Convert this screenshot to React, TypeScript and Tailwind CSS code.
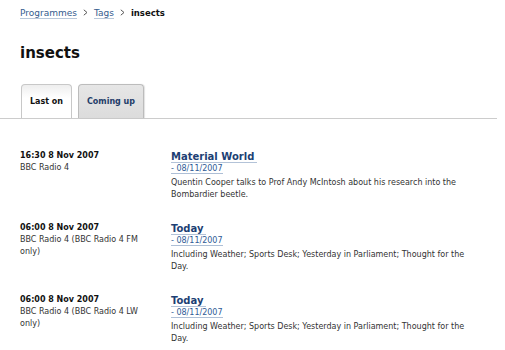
import React from "react";

function Chevron() {
  return (
    <svg
      width="5"
      height="7"
      viewBox="0 0 5 7"
      className="inline-block align-baseline mx-[6px]"
    >
      <polyline points="0.8,0.8 4,3.5 0.8,6.2" fill="none" stroke="#555" strokeWidth="1" />
    </svg>
  );
}

const rows = [
  {
    time: "16:30 8 Nov 2007",
    channel: "BBC Radio 4",
    title: "Material World",
    date: "- 08/11/2007",
    desc: "Quentin Cooper talks to Prof Andy McIntosh about his research into the Bombardier beetle.",
  },
  {
    time: "06:00 8 Nov 2007",
    channel: "BBC Radio 4 (BBC Radio 4 FM only)",
    title: "Today",
    date: "- 08/11/2007",
    desc: "Including Weather; Sports Desk; Yesterday in Parliament; Thought for the Day.",
  },
  {
    time: "06:00 8 Nov 2007",
    channel: "BBC Radio 4 (BBC Radio 4 LW only)",
    title: "Today",
    date: "- 08/11/2007",
    desc: "Including Weather; Sports Desk; Yesterday in Parliament; Thought for the Day.",
  },
];

export default function App() {
  return (
    <div className="w-[505px] h-[350px] bg-white overflow-hidden font-['DejaVu_Sans','Verdana',sans-serif] text-[#222]">
      <div className="pl-[20px] pt-[7px] text-[9px] leading-[12px]">
        <a className="text-[#345c8e] border-b border-[#b9c8da]">Programmes</a>
        <Chevron />
        <a className="text-[#345c8e] border-b border-[#b9c8da]">Tags</a>
        <Chevron />
        <span className="font-bold text-[8.5px] text-[#111]">insects</span>
      </div>

      <h1 className="mt-[25px] pl-[20px] text-[15px] leading-[18px] font-bold text-[#111]">
        insects
      </h1>

      <div className="mt-[22px] w-[497px] h-[35px] border-b border-[#cccccc] flex items-end gap-[6px] pl-[21px]">
        <div className="h-[34px] w-[51px] border border-b-0 border-[#c8c8c8] rounded-t-[4px] bg-[linear-gradient(#eeeeee,#ffffff_40%)] pt-[11px] text-center text-[8px] leading-[12px] font-bold text-[#111]">
          Last on
        </div>
        <div className="h-[34px] w-[66px] border border-b-0 border-[#bcbcbc] rounded-t-[4px] bg-[linear-gradient(#e6e6e6,#dcdcdc)] shadow-[1px_0_1px_rgba(0,0,0,0.12)] pt-[11px] text-center text-[8px] leading-[12px] font-bold text-[#1f3d69]">
          Coming up
        </div>
      </div>

      <div className="pt-[31px] flex flex-col gap-[22px]">
        {rows.map((r, i) => (
          <div key={i} className="flex pl-[20px]">
            <div className="w-[130px] mr-[21px] text-[8px] leading-[12px]">
              <div className="font-bold text-[#111]">{r.time}</div>
              <div className="text-[#333]">{r.channel}</div>
            </div>
            <div className="w-[310px]">
              <div className="text-[10px] leading-[13px] font-bold">
                <a className="text-[#1d3f74] border-b border-[#b3c3d8] pr-[3px]">{r.title}</a>
              </div>
              <div className="text-[8px] leading-[12px]">
                <a className="text-[#2f5b96] border-b border-[#aebfd6]">{r.date}</a>
              </div>
              <div className="mt-[2px] text-[8px] leading-[11.5px] text-[#333]">{r.desc}</div>
            </div>
          </div>
        ))}
      </div>
    </div>
  );
}
